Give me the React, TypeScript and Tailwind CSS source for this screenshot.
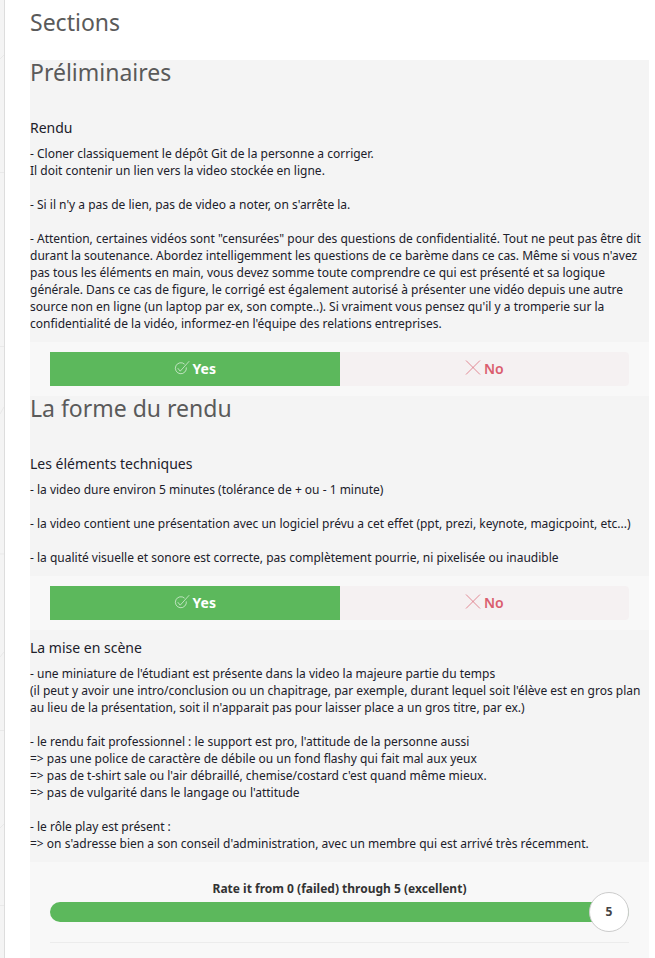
import { useState } from "react";
import type { ReactNode } from "react";

function CheckIcon() {
  return (
    <svg className="mb-0.5 size-4" viewBox="0 0 16 16" fill="none" stroke="currentColor" strokeWidth="0.6" aria-hidden="true">
      <path d="M10.6 4.2A5.5 5.5 0 1 0 12.3 7.4" />
      <path d="M3.8 8.2 6.2 11.2 15.2 1.2" />
    </svg>
  );
}

function CrossIcon() {
  return (
    <svg className="mb-1 size-4" viewBox="0 0 16 16" fill="none" stroke="currentColor" strokeWidth="0.7" aria-hidden="true">
      <path d="M1 1.5 15 15.5M15 1.5 1 15.5" />
    </svg>
  );
}

function YesNo({ label }: { label: string }) {
  const [yes, setYes] = useState(true);
  const on = "bg-[#5cb85c] font-bold text-white";
  const off = "bg-[#f5f1f2] font-semibold text-[#da5d6e]";
  return (
    <div className="bg-[#f8f8f8] px-5 py-2.5">
      <div role="group" aria-label={label} className="flex text-sm">
        <button
          type="button"
          aria-pressed={yes}
          onClick={() => setYes(true)}
          className={`flex h-[34px] flex-1 items-center justify-center gap-[3px] ${yes ? on : off}`}
        >
          <CheckIcon />
          Yes
        </button>
        <button
          type="button"
          aria-pressed={!yes}
          onClick={() => setYes(false)}
          className={`flex h-[34px] flex-1 items-center justify-center gap-[3px] rounded-r ${yes ? off : on}`}
        >
          <CrossIcon />
          No
        </button>
      </div>
    </div>
  );
}

function Rating() {
  const [value, setValue] = useState(5);
  return (
    <div className="flex-1 bg-[#f8f8f8] px-5 pt-[18px] pb-4">
      <div className="border-b border-[#ececec] pb-2.5">
        <label htmlFor="rating" className="block h-3 text-center text-xs leading-[17px] font-bold text-[#333333]">
          Rate it from 0 (failed) through 5 (excellent)
        </label>
        <div className="relative">
          <input
            id="rating"
            type="range"
            min={0}
            max={5}
            value={value}
            onChange={(e) => setValue(Number(e.target.value))}
            className="block h-10 w-full cursor-pointer appearance-none bg-transparent [&::-webkit-slider-runnable-track]:h-5 [&::-webkit-slider-runnable-track]:rounded-full [&::-webkit-slider-runnable-track]:bg-[#5cb85c] [&::-webkit-slider-thumb]:-mt-2.5 [&::-webkit-slider-thumb]:size-10 [&::-webkit-slider-thumb]:appearance-none [&::-webkit-slider-thumb]:rounded-full [&::-webkit-slider-thumb]:border [&::-webkit-slider-thumb]:border-[#cccccc] [&::-webkit-slider-thumb]:bg-white"
          />
          <div className="pointer-events-none absolute inset-y-0 right-10 left-0">
            <output
              htmlFor="rating"
              className="absolute flex size-10 items-center justify-center text-xs font-bold text-[#444444]"
              style={{ left: `${(value / 5) * 100}%` }}
            >
              {value}
            </output>
          </div>
        </div>
      </div>
    </div>
  );
}

function Heading({ children }: { children: ReactNode }) {
  return <h3 className="h-[50px] text-[23px] leading-[25px] text-[#5a5a5a]">{children}</h3>;
}

function Question({ title, children }: { title: string; children: string }) {
  return (
    <>
      <h4 className="pt-2.5 pb-[9px] text-sm leading-4">{title}</h4>
      <p className="pb-2.5 text-xs leading-[17px] whitespace-pre-line">{children}</p>
    </>
  );
}

const rendu = `- Cloner classiquement le dépôt Git de la personne a corriger.
Il doit contenir un lien vers la video stockée en ligne.

- Si il n'y a pas de lien, pas de video a noter, on s'arrête la.

- Attention, certaines vidéos sont "censurées" pour des questions de confidentialité. Tout ne peut pas être dit durant la soutenance. Abordez intelligemment les questions de ce barème dans ce cas. Même si vous n'avez pas tous les éléments en main, vous devez somme toute comprendre ce qui est présenté et sa logique générale. Dans ce cas de figure, le corrigé est également autorisé à présenter une vidéo depuis une autre source non en ligne (un laptop par ex, son compte..). Si vraiment vous pensez qu'il y a tromperie sur la confidentialité de la vidéo, informez-en l'équipe des relations entreprises.`;

const technique = `- la video dure environ 5 minutes (tolérance de + ou - 1 minute)

- la video contient une présentation avec un logiciel prévu a cet effet (ppt, prezi, keynote, magicpoint, etc...)

- la qualité visuelle et sonore est correcte, pas complètement pourrie, ni pixelisée ou inaudible`;

const scene = `- une miniature de l'étudiant est présente dans la video la majeure partie du temps
(il peut y avoir une intro/conclusion ou un chapitrage, par exemple, durant lequel soit l'élève est en gros plan au lieu de la présentation, soit il n'apparait pas pour laisser place a un gros titre, par ex.)

- le rendu fait professionnel : le support est pro, l'attitude de la personne aussi
=> pas une police de caractère de débile ou un fond flashy qui fait mal aux yeux
=> pas de t-shirt sale ou l'air débraillé, chemise/costard c'est quand même mieux.
=> pas de vulgarité dans le langage ou l'attitude

- le rôle play est présent :
=> on s'adresse bien a son conseil d'administration, avec un membre qui est arrivé très récemment.`;

export default function App() {
  return (
    <div className="flex min-h-screen bg-white font-['Noto_Sans','Open_Sans',sans-serif] text-[#20202a]">
      <div className="w-[5px] shrink-0 overflow-hidden border-r border-[#dddddd] bg-[#f4f4f4]">
        <svg width="4" height="958" fill="none" stroke="#e9e9e9" aria-hidden="true">
          <path d="M0 172.5H4M0 346.5H4M0 554H4M0 730.5H4M0 905.5H4" />
          <path d="M0 59 4 55M0 414 4 407M0 657 4 652M0 828 4 824" />
        </svg>
      </div>
      <main className="flex min-w-0 flex-1 flex-col pr-1.5 pl-[25px]">
        <h2 className="h-[60px] pt-2.5 text-[23px] leading-[25px] text-[#5a5a5a]">Sections</h2>
        <div className="flex flex-1 flex-col bg-[#f4f4f4]">
          <Heading>Préliminaires</Heading>
          <Question title="Rendu">{rendu}</Question>
          <YesNo label="Rendu" />
          <Heading>La forme du rendu</Heading>
          <Question title="Les éléments techniques">{technique}</Question>
          <YesNo label="Les éléments techniques" />
          <Question title="La mise en scène">{scene}</Question>
          <Rating />
        </div>
      </main>
    </div>
  );
}
